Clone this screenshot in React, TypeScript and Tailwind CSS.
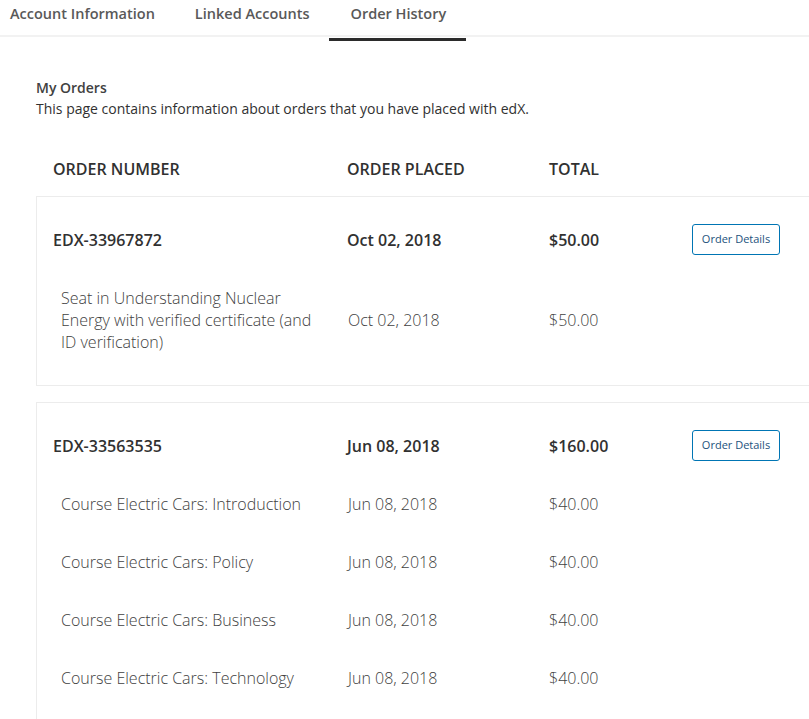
import React from "react";

interface OrderItem {
  title: string;
  date: string;
  price: string;
}

interface Order {
  number: string;
  date: string;
  total: string;
  items: OrderItem[];
}

const orders: Order[] = [
  {
    number: "EDX-33967872",
    date: "Oct 02, 2018",
    total: "$50.00",
    items: [
      {
        title: "Seat in Understanding Nuclear Energy with verified certificate (and ID verification)",
        date: "Oct 02, 2018",
        price: "$50.00",
      },
    ],
  },
  {
    number: "EDX-33563535",
    date: "Jun 08, 2018",
    total: "$160.00",
    items: [
      { title: "Course Electric Cars: Introduction", date: "Jun 08, 2018", price: "$40.00" },
      { title: "Course Electric Cars: Policy", date: "Jun 08, 2018", price: "$40.00" },
      { title: "Course Electric Cars: Business", date: "Jun 08, 2018", price: "$40.00" },
      { title: "Course Electric Cars: Technology", date: "Jun 08, 2018", price: "$40.00" },
    ],
  },
];

const tabs = ["Account Information", "Linked Accounts", "Order History"];

const OrderCard: React.FC<{ order: Order }> = ({ order }) => (
  <div className="w-[820px] border border-[#ececec] pt-[27px] pb-[14px] pl-[16px]">
    <div className="flex items-center h-[31px] mb-[14px] text-[16px] font-semibold text-[#313131]">
      <div className="w-[294px]">{order.number}</div>
      <div className="w-[202px]">{order.date}</div>
      <div className="w-[143px]">{order.total}</div>
      <button className="w-[88px] h-[31px] border border-[#0075b4] rounded-[3px] text-[11px] font-normal text-[#23527c] bg-white">
        Order Details
      </button>
    </div>
    {order.items.map((item, idx) => (
      <div key={idx} className="flex items-center py-[18px] text-[16px] leading-[22px] font-light text-[#414141]">
        <div className="w-[294px] pl-[8px] pr-[24px]">{item.title}</div>
        <div className="w-[202px] pl-px">{item.date}</div>
        <div className="w-[143px]">{item.price}</div>
      </div>
    ))}
  </div>
);

export default function App() {
  return (
    <div className="w-[809px] h-[719px] overflow-hidden bg-white font-['Open_Sans',sans-serif]">
      <div className="relative">
        <div className="flex ml-[-10px] h-[41px]">
          {tabs.map((tab) => {
            const active = tab === "Order History";
            return (
              <div
                key={tab}
                className={
                  "relative px-[20px] pt-[3px] text-[14.5px] font-semibold text-[#595959] z-10 " +
                  (active ? "border-b-[3px] border-[#2b2b2b] pl-[21px]" : "")
                }
              >
                {tab}
              </div>
            );
          })}
        </div>
        <div className="absolute left-0 right-0 top-[35px] h-[2px] bg-[#f2f2f2]" />
      </div>

      <div className="pl-[36px] pt-[37px]">
        <div className="text-[14px] font-semibold text-[#414141] leading-[20px]">My Orders</div>
        <div className="text-[14px] text-[#313131] leading-[20px] mt-px">
          This page contains information about orders that you have placed with edX.
        </div>

        <div className="flex items-center pl-[17px] mt-[38px] h-[24px] text-[16px] font-semibold text-[#313131] uppercase">
          <div className="w-[294px]">Order Number</div>
          <div className="w-[202px]">Order Placed</div>
          <div className="w-[143px]">Total</div>
        </div>

        <div className="flex flex-col gap-[16px] mt-[15px]">
          {orders.map((o) => (
            <OrderCard key={o.number} order={o} />
          ))}
        </div>
      </div>
    </div>
  );
}
